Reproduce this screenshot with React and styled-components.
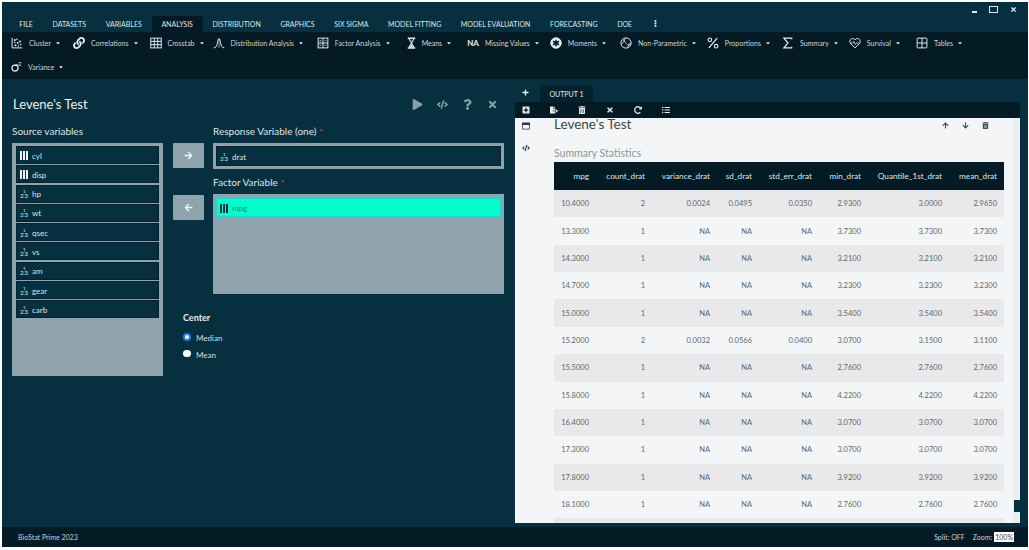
import React from "react";
import styled, { createGlobalStyle } from "styled-components";
import {
  FaPlay,
  FaCode,
  FaQuestion,
  FaTimes,
  FaArrowRight,
  FaArrowLeft,
  FaArrowUp,
  FaArrowDown,
  FaTrashAlt,
  FaPlus,
  FaPlusSquare,
  FaFileExport,
  FaRedoAlt,
  FaListUl,
  FaRegWindowMaximize,
  FaLink,
  FaCaretDown,
  FaEllipsisV,
} from "react-icons/fa";

const GlobalStyle = createGlobalStyle`
  html, body { margin: 0; padding: 0; background: #fff; overflow: hidden; }
  body { font-family: "Lato", "Liberation Sans", sans-serif; }
`;

const Frame = styled.div`
  width: 1026px;
  height: 545px;
  margin: 2px 0 0 2px;
  display: flex;
  flex-direction: column;
  background: #06303f;
  color: #e6ecef;
`;

const TitleBar = styled.div`
  height: 14px;
  display: flex;
  justify-content: flex-end;
  align-items: center;
  gap: 12px;
  padding-right: 11px;
  color: #dfe7ea;
`;

const WinMin = styled.span`
  width: 5px;
  height: 2px;
  background: currentColor;
  margin-top: 6px;
`;
const WinMax = styled.span`
  width: 7px;
  height: 5px;
  border: 1.5px solid currentColor;
`;

const MenuBar = styled.div`
  height: 16px;
  display: flex;
  padding-left: 7.5px;
`;

const MenuTab = styled.div`
  height: 15px;
  padding: 0 9.8px 1px;
  display: flex;
  align-items: center;
  font-size: 7px;
  color: #dde5e8;
  border-radius: 3px 3px 0 0;
  background: ${(p) => (p.$active ? "#041a24" : "transparent")};
`;

const Toolbar = styled.div`
  height: 47px;
  background: #041a24;
  display: flex;
  flex-wrap: wrap;
  align-content: flex-start;
  row-gap: 1px;
  padding: 0 0 0 9px;
`;

const ToolBreak = styled.div`
  flex-basis: 100%;
  height: 0;
`;

const ToolItem = styled.div`
  height: 22px;
  display: flex;
  align-items: center;
  gap: 6px;
  font-size: 7px;
  color: #ccd6da;
  margin-right: ${(p) => p.$gap}px;
  svg.main { color: #e6ecef; flex: none; }
  svg.caret { width: 6px; height: 6px; margin-left: -2px; color: #e6ecef; }
`;

const Na = styled.b`
  font-size: 8px;
  color: #e6ecef;
`;

const Main = styled.div`
  flex: 1;
  display: flex;
  min-height: 0;
`;

const LeftPane = styled.div`
  width: 513px;
  flex: none;
  padding: 0 0 0 10px;
  box-sizing: border-box;
`;

const TitleRow = styled.div`
  height: 46px;
  box-sizing: border-box;
  padding: 4px 17px 0 1px;
  display: flex;
  align-items: center;
  justify-content: space-between;
`;

const PaneTitle = styled.h1`
  margin: 0;
  font-size: 13px;
  font-weight: 400;
  color: #e9eff1;
`;

const Actions = styled.div`
  display: flex;
  align-items: center;
  gap: 14px;
  color: #8b9ea7;
  font-size: 11px;
`;

const Columns = styled.div`
  display: flex;
`;

const SourceCol = styled.div`
  width: 151px;
`;

const Label = styled.div`
  height: 12px;
  font-size: 10px;
  line-height: 12px;
  color: #dfe6e9;
  margin-bottom: 6px;
  em { color: #e2552e; font-style: normal; margin-left: 3px; font-size: 8px; }
`;

const SourceBox = styled.div`
  height: 233px;
  background: #90a4ae;
  padding: 3px 4px;
  display: flex;
  flex-direction: column;
  gap: 1.3px;
  box-sizing: border-box;
`;

const VarItem = styled.div`
  height: 18px;
  flex: none;
  display: flex;
  align-items: center;
  gap: 3px;
  padding: 1px 0 0 4px;
  box-sizing: border-box;
  font-size: 8px;
  background: ${(p) => (p.$selected ? "#00ffc8" : "#06303f")};
  color: ${(p) => (p.$selected ? "#148a7a" : "#dbe3e6")};
  box-shadow: inset 0 0 0 1px ${(p) => (p.$selected ? "#1fd6d0" : "#05222e")};
`;

const Bars = styled.span`
  display: inline-flex;
  gap: 1px;
  margin-right: 1px;
  i {
    width: 2px;
    height: 9px;
    background: ${(p) => (p.$dark ? "#06303f" : "#f0f4f5")};
  }
`;

const NumGlyph = styled.span`
  position: relative;
  display: inline-block;
  width: 9px;
  height: 10px;
  font-size: 6.5px;
  line-height: 6px;
  flex: none;
  span { position: absolute; left: 0; bottom: 0; letter-spacing: 0.6px; }
  sup { position: absolute; left: 3px; top: 0; font-size: 4.5px; line-height: 5px; margin: 0; }
`;

const ArrowCol = styled.div`
  width: 31px;
  margin: 18px 9px 0 10px;
  display: flex;
  flex-direction: column;
  gap: 27px;
`;

const ArrowButton = styled.div`
  width: 31px;
  height: 25px;
  border-radius: 1px;
  background: #90a4ae;
  display: flex;
  align-items: center;
  justify-content: center;
  color: #f3f6f7;
  font-size: 9px;
`;

const TargetCol = styled.div`
  width: 291px;
`;

const ResponseBox = styled.div`
  height: 26px;
  background: #90a4ae;
  padding: 3px;
  box-sizing: border-box;
  margin-bottom: 7px;
  ${VarItem} { height: 20px; }
`;

const FactorBox = styled.div`
  height: 100px;
  background: #90a4ae;
  padding: 4px 3px;
  box-sizing: border-box;
  ${VarItem} { height: 19px; }
`;

const CenterGroup = styled.div`
  margin: 18px 0 0 -30px;
`;

const CenterTitle = styled.div`
  font-size: 9px;
  font-weight: 700;
  color: #e6ecef;
  margin-bottom: 7px;
`;

const RadioRow = styled.label`
  height: 16.5px;
  display: flex;
  align-items: center;
  gap: 5.5px;
  font-size: 8px;
  color: #d5dee2;
`;

const RadioDot = styled.span`
  width: 7.5px;
  height: 7.5px;
  border-radius: 50%;
  background: #fff;
  box-sizing: border-box;
  border: ${(p) => (p.$on ? "2px solid #1a7cf5" : "none")};
  margin-top: -3px;
`;

const RightPane = styled.div`
  flex: 1;
  display: flex;
  flex-direction: column;
  min-width: 0;
  padding-right: 8px;
`;

const TabRow = styled.div`
  height: 23px;
  display: flex;
  align-items: flex-end;
`;

const AddTab = styled.div`
  width: 25px;
  height: 17px;
  box-sizing: border-box;
  padding: 0 5px 2px 0;
  display: flex;
  align-items: center;
  justify-content: center;
  color: #f2f5f6;
  font-size: 7px;
`;

const OutputTab = styled.div`
  width: 53px;
  height: 17px;
  border-radius: 3px 3px 0 0;
  display: flex;
  align-items: center;
  justify-content: center;
  font-size: 7px;
  color: #e3e9ec;
  background: #04222e;
`;

const OutToolbar = styled.div`
  height: 16px;
  box-sizing: border-box;
  background: #041a24;
  display: flex;
  align-items: center;
  color: #e8edef;
  font-size: 8px;
  padding: 0 0 1px 7px;
  gap: 20px;
`;

const Sheet = styled.div`
  height: 405px;
  background: #f4f5f7;
  display: flex;
  position: relative;
`;

const Rail = styled.div`
  width: 39px;
  flex: none;
  display: flex;
  flex-direction: column;
  align-items: flex-start;
  padding: 4px 0 0 7px;
  box-sizing: border-box;
  gap: 14px;
  color: #263a44;
  font-size: 8px;
`;

const Report = styled.div`
  flex: 1;
  min-width: 0;
`;

const ReportHead = styled.div`
  height: 13px;
  display: flex;
  justify-content: space-between;
  align-items: center;
  padding-right: 31px;
`;

const ReportTitle = styled.h2`
  margin: 0;
  font-size: 13.5px;
  line-height: 13px;
  font-weight: 400;
  color: #37474f;
`;

const CardTools = styled.div`
  display: flex;
  gap: 13px;
  color: #33454e;
  font-size: 7px;
  margin-top: 2px;
`;

const SubTitle = styled.div`
  margin: 15px 0 1px 0;
  height: 15px;
  line-height: 15px;
  font-size: 10.5px;
  color: #8b98a0;
`;

const TableClip = styled.div`
  height: 361px;
  overflow: hidden;
`;

const Table = styled.table`
  width: 450px;
  border-collapse: collapse;
  table-layout: fixed;
  font-size: 7.5px;
  th {
    background: #041a24;
    color: #dfe6e9;
    font-weight: 400;
    font-size: 8.2px;
    height: 28px;
    padding: 0 7px 0 0;
    text-align: right;
    white-space: nowrap;
  }
  td {
    height: 27.36px;
    padding: 0 7px 0 0;
    text-align: right;
    color: #5b666c;
    box-sizing: border-box;
  }
  tbody tr:nth-child(odd) td { background: #e9e9eb; }
`;

const ScrollTrack = styled.div`
  position: absolute;
  right: 0;
  top: 0;
  bottom: 0;
  width: 7px;
  background: #eceef0;
`;

const ScrollThumb = styled.div`
  position: absolute;
  left: 1px;
  top: 382px;
  width: 6px;
  height: 12px;
  background: #06303f;
`;

const Footer = styled.div`
  height: 20px;
  flex: none;
  background: #041a24;
  display: flex;
  align-items: center;
  justify-content: space-between;
  padding: 0 14px 0 16px;
  font-size: 7px;
  color: #c9d3d7;
`;

const ZoomInfo = styled.div`
  display: flex;
  align-items: center;
  gap: 8px;
`;

const ZoomValue = styled.span`
  background: #fff;
  color: #3a464c;
  padding: 1px 1px;
  margin-left: -6px;
`;

const Ic = ({ children, w = 12, h = 12, vb = "0 0 16 16" }) => (
  <svg className="main" width={w} height={h} viewBox={vb} fill="none" stroke="currentColor" strokeWidth="1.3">
    {children}
  </svg>
);

const ClusterIcon = () => (
  <Ic>
    <path d="M1.5 1v13.5H15" />
    <g fill="currentColor" stroke="none">
      <circle cx="5" cy="4" r="1.3" />
      <circle cx="8" cy="3" r="1.1" />
      <circle cx="5" cy="7" r="1.1" />
      <circle cx="12" cy="6" r="1.3" />
      <circle cx="9" cy="8" r="1.2" />
      <circle cx="13" cy="10" r="1.1" />
      <circle cx="6" cy="11" r="1.3" />
      <circle cx="10" cy="12" r="1.1" />
    </g>
  </Ic>
);
const GridIcon = () => (
  <Ic>
    <rect x="1" y="1.500" width="14" height="13" />
    <path d="M5.700 1.500v13M10.300 1.500v13M1 5.800h14M1 10.200h14" />
  </Ic>
);
const BellIcon = () => (
  <Ic>
    <path d="M1 14.500c3 0 4-2.500 4.800-6C6.500 5 7 2 8 2s1.500 3 2.200 6.500c.8 3.500 1.800 6 4.800 6" />
    <path d="M8 3v11.500" strokeWidth="0.8" />
  </Ic>
);
const FactorIcon = () => (
  <Ic>
    <rect x="1.500" y="1.500" width="13" height="13" />
    <path d="M8 1.500v13M1.500 8h13" />
    <path d="M3.500 5h2M4.500 4v2M10 5h3M10 11h3M3.500 10l2 2M5.500 10l-2 2" strokeWidth="0.8" />
  </Ic>
);
const SandIcon = () => (
  <Ic w={9} h={12} vb="0 0 12 16">
    <path d="M1 1.500h10M1 14.500h10" strokeWidth="2" />
    <path d="M2.500 2l3.500 6 3.500-6M2.500 14L6 8l3.500 6" strokeWidth="1.500" />
    <path d="M3.500 14L6 10l2.500 4z" fill="currentColor" stroke="none" />
  </Ic>
);
const MomentsIcon = () => (
  <Ic>
    <circle cx="8" cy="8" r="7" fill="currentColor" />
    <path d="M8 3.500v9M4 5.700l8 4.600M12 5.700l-8 4.600" stroke="#041a24" strokeWidth="2" />
  </Ic>
);
const NonParamIcon = () => (
  <Ic>
    <circle cx="8" cy="8" r="6.800" />
    <path d="M3 3.500c3 .5 3.500 3 5 5s3.500 2.500 5.500 2M7 1.500L5 7l-3 2M10 14l2.500-5 2.500-1" strokeWidth="1" />
  </Ic>
);
const PercentIcon = () => (
  <Ic>
    <path d="M13.500 1.500L2.500 14.500" strokeWidth="1.700" />
    <circle cx="3.800" cy="3.800" r="2.400" strokeWidth="1.500" />
    <circle cx="12.200" cy="12.200" r="2.400" strokeWidth="1.500" />
  </Ic>
);
const SigmaIcon = () => (
  <Ic>
    <path d="M13 3V1.500H2.500L8 8l-5.500 6.500H13V13" strokeWidth="1.600" />
  </Ic>
);
const HeartIcon = () => (
  <Ic>
    <path d="M8 14.500L2 8.500C0 6 1.500 2 4.700 2 6.300 2 7.400 3 8 4c.6-1 1.700-2 3.300-2C14.500 2 16 6 14 8.500z" />
    <path d="M1.500 8h4l1-2 2 4 1.500-2h4.500" strokeWidth="1" />
  </Ic>
);
const TableIcon = () => (
  <Ic>
    <rect x="1.500" y="1.500" width="13" height="13" rx="1" />
    <path d="M8 1.500v13M1.500 8h13" />
  </Ic>
);
const VarianceIcon = () => (
  <svg className="main" width="11" height="12" viewBox="0 0 15 16" fill="none" stroke="currentColor" strokeWidth="1.700">
    <circle cx="5.500" cy="9.500" r="4.200" />
    <path d="M5.500 5.300H10" />
    <text x="10" y="6.500" fontSize="7.500" fill="currentColor" stroke="none" fontFamily="Lato">2</text>
  </svg>
);

const tools = [
  { icon: <ClusterIcon />, label: "Cluster", gap: 12 },
  { icon: <FaLink className="main" size={12} />, label: "Correlations", gap: 11 },
  { icon: <GridIcon />, label: "Crosstab", gap: 8 },
  { icon: <BellIcon />, label: "Distribution Analysis", gap: 13 },
  { icon: <FactorIcon />, label: "Factor Analysis", gap: 16 },
  { icon: <SandIcon />, label: "Means", gap: 15 },
  { icon: <Na>NA</Na>, label: "Missing Values", gap: 10 },
  { icon: <MomentsIcon />, label: "Moments", gap: 13 },
  { icon: <NonParamIcon />, label: "Non-Parametric", gap: 10 },
  { icon: <PercentIcon />, label: "Proportions", gap: 11 },
  { icon: <SigmaIcon />, label: "Summary", gap: 10 },
  { icon: <HeartIcon />, label: "Survival", gap: 15 },
  { icon: <TableIcon />, label: "Tables", gap: 0 },
];

const menus = ["FILE", "DATASETS", "VARIABLES", "ANALYSIS", "DISTRIBUTION", "GRAPHICS", "SIX SIGMA", "MODEL FITTING", "MODEL EVALUATION", "FORECASTING", "DOE"];

const sourceVars = [
  ["cyl", "f"],
  ["disp", "f"],
  ["hp", "n"],
  ["wt", "n"],
  ["qsec", "n"],
  ["vs", "n"],
  ["am", "n"],
  ["gear", "n"],
  ["carb", "n"],
];

const columns = [
  ["mpg", 42],
  ["count_drat", 56],
  ["variance_drat", 65],
  ["sd_drat", 42],
  ["std_err_drat", 60],
  ["min_drat", 49],
  ["Quantile_1st_drat", 81],
  ["mean_drat", 55],
];

const rows = [
  ["10.4000", "2", "0.0024", "0.0495", "0.0350", "2.9300", "3.0000", "2.9650"],
  ["13.3000", "1", "NA", "NA", "NA", "3.7300", "3.7300", "3.7300"],
  ["14.3000", "1", "NA", "NA", "NA", "3.2100", "3.2100", "3.2100"],
  ["14.7000", "1", "NA", "NA", "NA", "3.2300", "3.2300", "3.2300"],
  ["15.0000", "1", "NA", "NA", "NA", "3.5400", "3.5400", "3.5400"],
  ["15.2000", "2", "0.0032", "0.0566", "0.0400", "3.0700", "3.1500", "3.1100"],
  ["15.5000", "1", "NA", "NA", "NA", "2.7600", "2.7600", "2.7600"],
  ["15.8000", "1", "NA", "NA", "NA", "4.2200", "4.2200", "4.2200"],
  ["16.4000", "1", "NA", "NA", "NA", "3.0700", "3.0700", "3.0700"],
  ["17.3000", "1", "NA", "NA", "NA", "3.0700", "3.0700", "3.0700"],
  ["17.8000", "1", "NA", "NA", "NA", "3.9200", "3.9200", "3.9200"],
  ["18.1000", "1", "NA", "NA", "NA", "2.7600", "2.7600", "2.7600"],
  // next row only shows its shaded top edge above the fold
  ["", "", "", "", "", "", "", ""],
];

const TypeGlyph = ({ type, dark }) =>
  type === "f" ? (
    <Bars $dark={dark}>
      <i />
      <i />
      <i />
    </Bars>
  ) : (
    <NumGlyph>
      <sup>1</sup>
      <span>23</span>
    </NumGlyph>
  );

export default function App() {
  return (
    <>
      <GlobalStyle />
      <Frame>
        <TitleBar>
          <WinMin />
          <WinMax />
          <FaTimes size={7} />
        </TitleBar>
        <MenuBar>
          {menus.map((m) => (
            <MenuTab key={m} $active={m === "ANALYSIS"}>
              {m}
            </MenuTab>
          ))}
          <MenuTab>
            <FaEllipsisV size={7} />
          </MenuTab>
        </MenuBar>
        <Toolbar>
          {tools.map((t) => (
            <ToolItem key={t.label} $gap={t.gap}>
              {t.icon}
              <span>{t.label}</span>
              <FaCaretDown className="caret" />
            </ToolItem>
          ))}
          <ToolBreak />
          <ToolItem $gap={0}>
            <VarianceIcon />
            <span>Variance</span>
            <FaCaretDown className="caret" />
          </ToolItem>
        </Toolbar>
        <Main>
          <LeftPane>
            <TitleRow>
              <PaneTitle>Levene's Test</PaneTitle>
              <Actions>
                <FaPlay />
                <FaCode />
                <FaQuestion />
                <FaTimes />
              </Actions>
            </TitleRow>
            <Columns>
              <SourceCol>
                <Label>Source variables</Label>
                <SourceBox>
                  {sourceVars.map(([name, type]) => (
                    <VarItem key={name}>
                      <TypeGlyph type={type} />
                      {name}
                    </VarItem>
                  ))}
                </SourceBox>
              </SourceCol>
              <ArrowCol>
                <ArrowButton>
                  <FaArrowRight />
                </ArrowButton>
                <ArrowButton>
                  <FaArrowLeft />
                </ArrowButton>
              </ArrowCol>
              <TargetCol>
                <Label>
                  Response Variable (one)<em>*</em>
                </Label>
                <ResponseBox>
                  <VarItem>
                    <TypeGlyph type="n" />
                    drat
                  </VarItem>
                </ResponseBox>
                <Label>
                  Factor Variable<em>*</em>
                </Label>
                <FactorBox>
                  <VarItem $selected>
                    <TypeGlyph type="f" dark />
                    mpg
                  </VarItem>
                </FactorBox>
                <CenterGroup>
                  <CenterTitle>Center</CenterTitle>
                  <RadioRow>
                    <RadioDot $on />
                    Median
                  </RadioRow>
                  <RadioRow>
                    <RadioDot />
                    Mean
                  </RadioRow>
                </CenterGroup>
              </TargetCol>
            </Columns>
          </LeftPane>
          <RightPane>
            <TabRow>
              <AddTab>
                <FaPlus />
              </AddTab>
              <OutputTab>OUTPUT 1</OutputTab>
            </TabRow>
            <OutToolbar>
              <FaPlusSquare />
              <FaFileExport />
              <FaTrashAlt />
              <FaTimes />
              <FaRedoAlt />
              <FaListUl />
            </OutToolbar>
            <Sheet>
              <Rail>
                <FaRegWindowMaximize />
                <FaCode />
              </Rail>
              <Report>
                <ReportHead>
                  <ReportTitle>Levene's Test</ReportTitle>
                  <CardTools>
                    <FaArrowUp />
                    <FaArrowDown />
                    <FaTrashAlt />
                  </CardTools>
                </ReportHead>
                <SubTitle>Summary Statistics</SubTitle>
                <TableClip>
                  <Table>
                    <colgroup>
                      {columns.map(([name, w]) => (
                        <col key={name} style={{ width: w }} />
                      ))}
                    </colgroup>
                    <thead>
                      <tr>
                        {columns.map(([name]) => (
                          <th key={name}>{name}</th>
                        ))}
                      </tr>
                    </thead>
                    <tbody>
                      {rows.map((r, n) => (
                        <tr key={n}>
                          {r.map((c, i) => (
                            <td key={i}>{c}</td>
                          ))}
                        </tr>
                      ))}
                    </tbody>
                  </Table>
                </TableClip>
              </Report>
              <ScrollTrack>
                <ScrollThumb />
              </ScrollTrack>
            </Sheet>
          </RightPane>
        </Main>
        <Footer>
          <span>BioStat Prime 2023</span>
          <ZoomInfo>
            <span>Split: OFF</span>
            <span>Zoom:</span>
            <ZoomValue>100%</ZoomValue>
          </ZoomInfo>
        </Footer>
      </Frame>
    </>
  );
}
